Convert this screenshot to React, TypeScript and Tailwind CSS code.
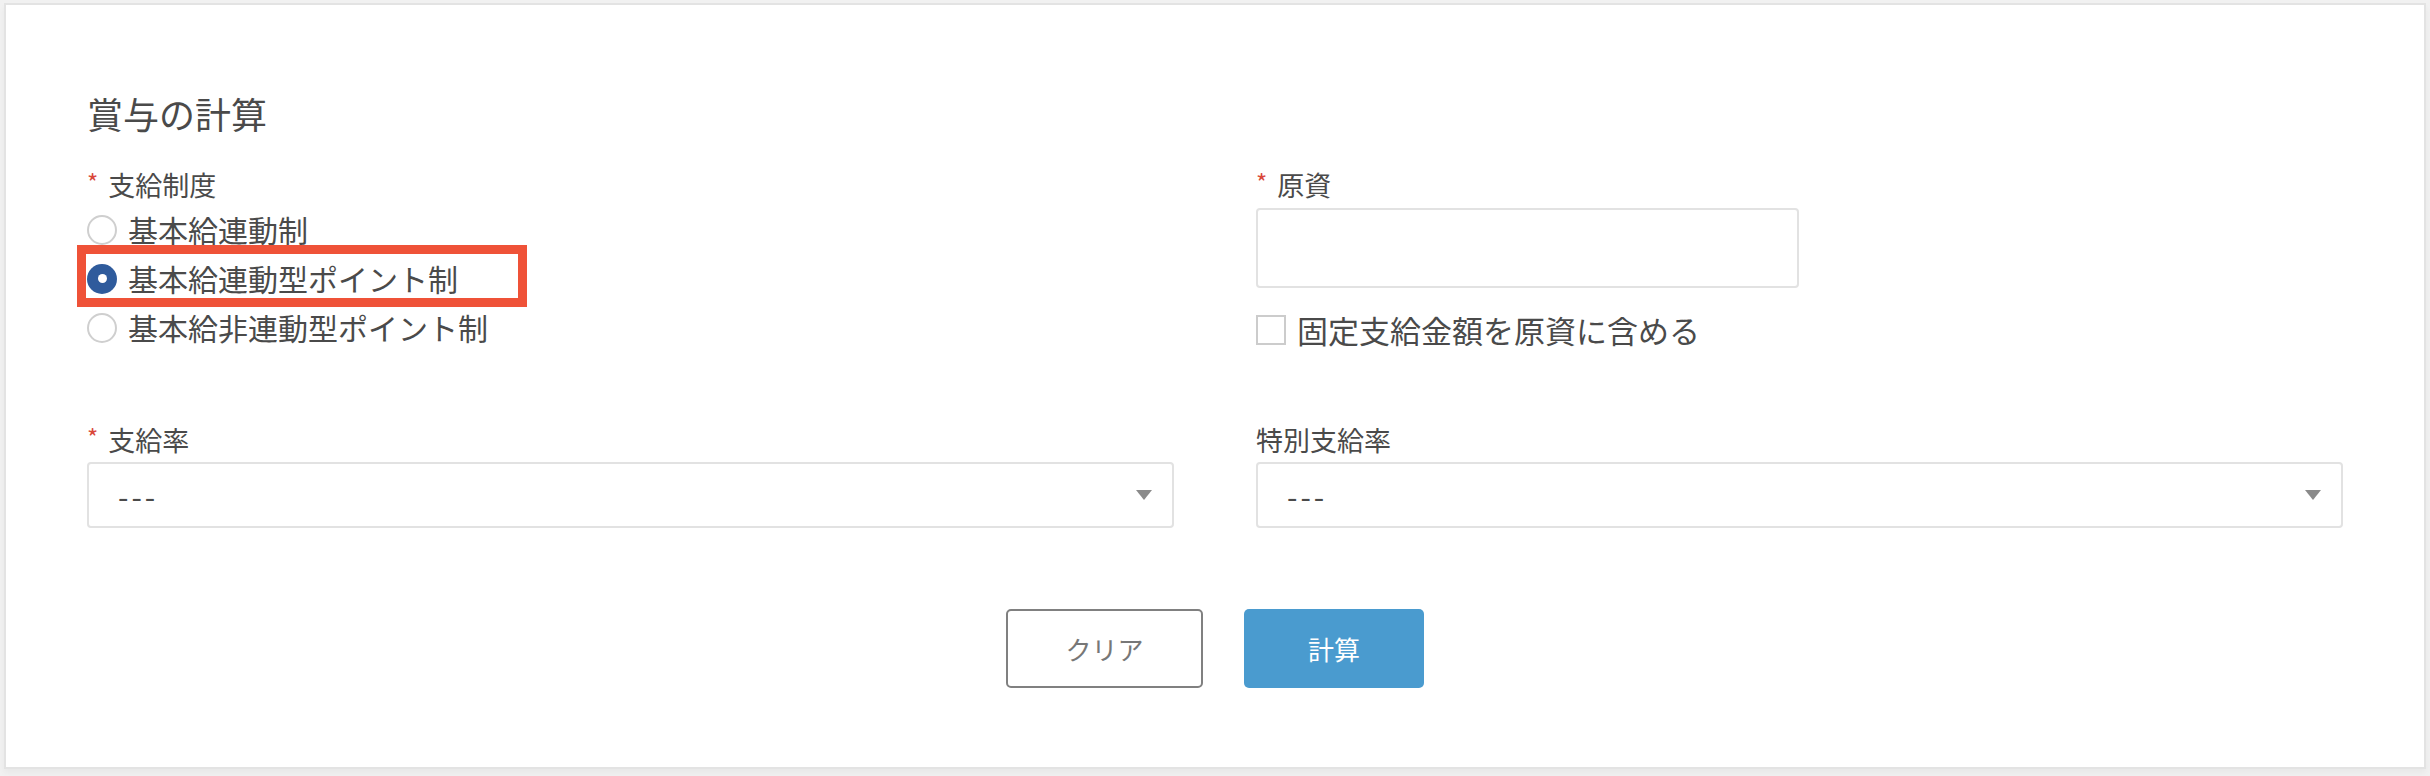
import React, { useState } from 'react'

// options for 支給制度
const systems = [
  { key: 'linked', label: '基本給連動制' },
  { key: 'linkedPoint', label: '基本給連動型ポイント制' },
  { key: 'unlinkedPoint', label: '基本給非連動型ポイント制' },
] as const

type SystemKey = typeof systems[number]['key']

function Label({ text, required }: { text: string; required?: boolean }) {
  return (
    <div className="flex items-center h-[32px] text-[27px] leading-[32px] text-[#4a4a4a]">
      {required && <span className="text-[#d9473a] text-[24px] mr-[10px] -mt-[6px]">*</span>}
      <span>{text}</span>
    </div>
  )
}

function Radio({ checked }: { checked: boolean }) {
  if (checked) {
    return (
      <span className="flex items-center justify-center w-[30px] h-[30px] rounded-full bg-[#2f5b9c] shrink-0">
        <span className="w-[9px] h-[9px] rounded-full bg-white" />
      </span>
    )
  }
  return <span className="w-[30px] h-[30px] rounded-full border-2 border-[#cfcfcf] bg-white shrink-0" />
}

function SelectBox() {
  return (
    <div className="flex items-center justify-between h-[66px] rounded-[4px] border-2 border-[#e2e2e2] bg-white pl-[29px] pr-[20px]">
      <span className="text-[30px] tracking-[3px] text-[#4a4a4a]">---</span>
      <svg width="16" height="10" viewBox="0 0 16 10">
        <path d="M0 0 L16 0 L8 10 Z" fill="#8a8a8a" />
      </svg>
    </div>
  )
}

export default function App() {
  const [system, setSystem] = useState<SystemKey>('linkedPoint')
  const [includeFixed, setIncludeFixed] = useState(false)

  return (
    <div className="min-h-screen bg-[#f1f1f1] pt-[3px] pl-[4px] font-['Noto_Sans_CJK_JP','Noto_Sans',sans-serif]">
      <div className="w-[2422px] h-[766px] border-2 border-[#e3e3e3] bg-white px-[81px] pt-[90px] shadow-[0_4px_6px_rgba(0,0,0,0.04)]">
        <h2 className="text-[36px] leading-[36px] text-[#4a4a4a]">賞与の計算</h2>

        <div className="grid grid-cols-2 gap-x-[82px] mt-[38px]">
          <div>
            <Label text="支給制度" required />
            <div className="mt-[4px]">
              {systems.map((s) => (
                <div
                  key={s.key}
                  className="relative flex items-center h-[49px] cursor-pointer"
                  onClick={() => setSystem(s.key)}
                >
                  <Radio checked={system === s.key} />
                  <span className="ml-[11px] text-[30px] leading-[49px] text-[#4a4a4a] whitespace-nowrap">{s.label}</span>
                  {s.key === 'linkedPoint' && (
                    <span className="absolute -left-[10px] -top-[9px] w-[450px] h-[62px] border-[9px] border-[#ef5238] pointer-events-none" />
                  )}
                </div>
              ))}
            </div>
          </div>

          <div>
            <Label text="原資" required />
            <div className="mt-[7px] w-[543px] h-[80px] rounded-[4px] border-2 border-[#e2e2e2] bg-white" />
            <div
              className="flex items-center h-[48px] mt-[18px] cursor-pointer"
              onClick={() => setIncludeFixed(!includeFixed)}
            >
              <span className="w-[30px] h-[30px] border-2 border-[#cccccc] bg-white shrink-0" />
              <span className="ml-[11px] text-[31px] leading-[48px] text-[#4a4a4a]">固定支給金額を原資に含める</span>
            </div>
          </div>
        </div>

        <div className="grid grid-cols-2 gap-x-[82px] mt-[70px]">
          <div>
            <Label text="支給率" required />
            <div className="mt-[6px]">
              <SelectBox />
            </div>
          </div>
          <div>
            <Label text="特別支給率" />
            <div className="mt-[6px]">
              <SelectBox />
            </div>
          </div>
        </div>

        <div className="flex justify-center gap-[41px] mt-[81px]">
          <button className="w-[197px] h-[79px] rounded-[5px] border-2 border-[#808080] bg-white text-[26px] text-[#777777]">
            クリア
          </button>
          <button className="w-[180px] h-[79px] rounded-[5px] bg-[#4a9bcf] text-[26px] text-white">
            計算
          </button>
        </div>
      </div>
    </div>
  )
}
